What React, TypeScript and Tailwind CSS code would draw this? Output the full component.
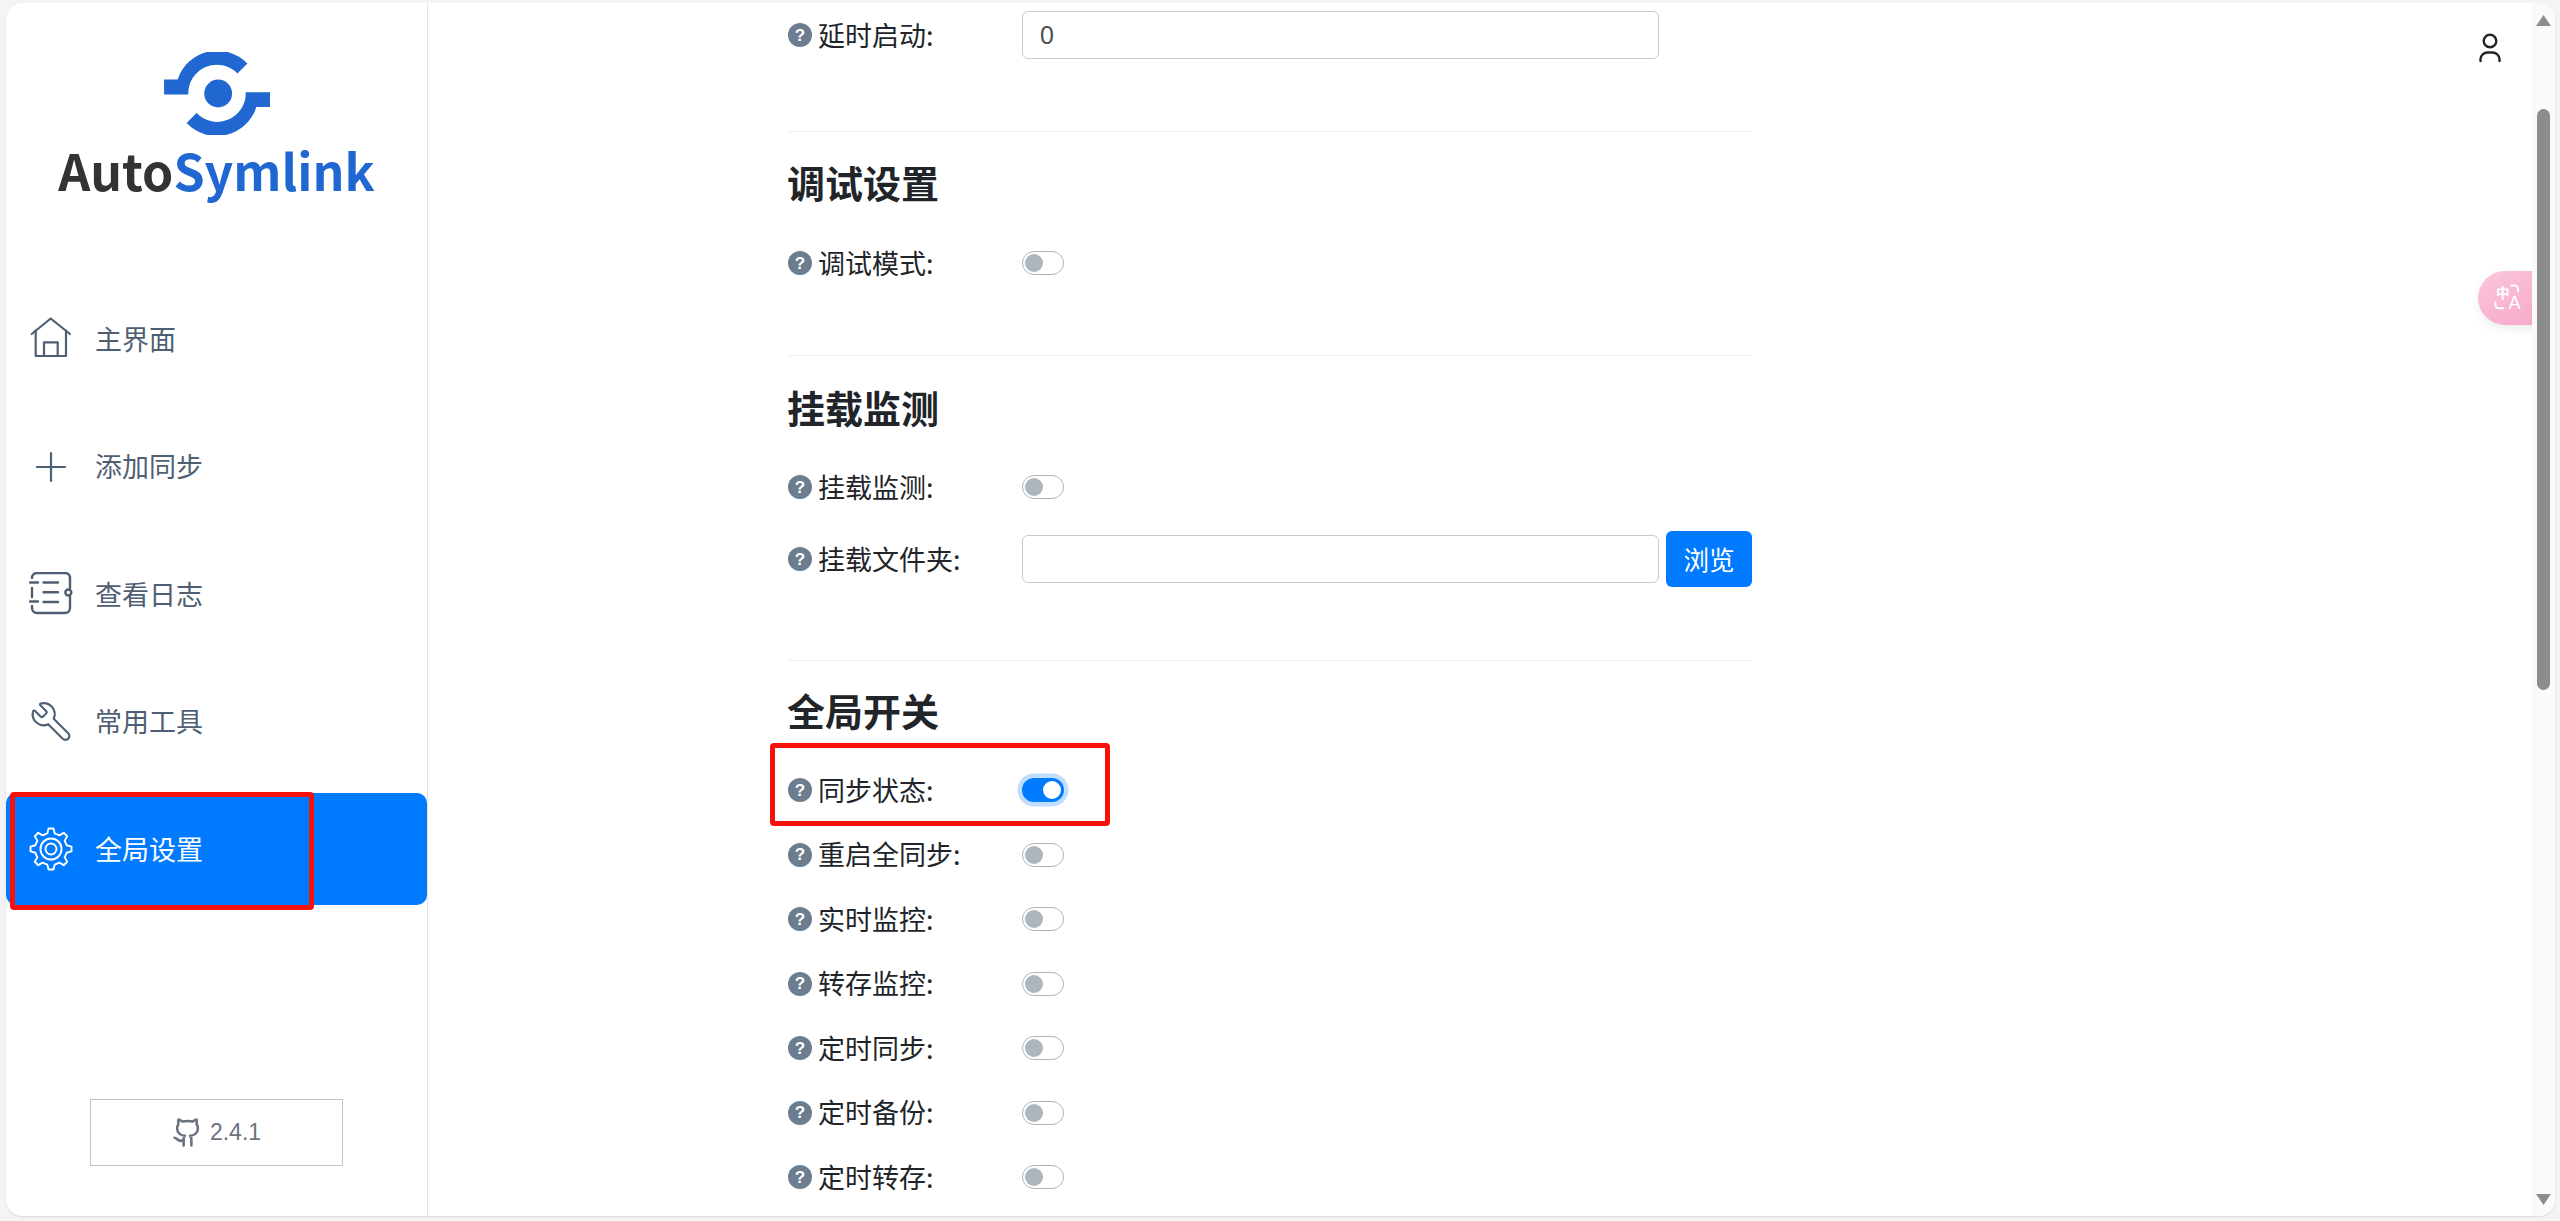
import { Github, Wrench } from 'lucide-react'

const cjk = "font-['Noto_Sans_CJK_SC','Noto_Sans',sans-serif]"

function gearPath(teeth: number, outer: number, root: number, c: number) {
  const step = (Math.PI * 2) / teeth
  const pts: string[] = []
  for (let i = 0; i < teeth; i++) {
    const a = i * step - Math.PI / 2
    const corners: [number, number][] = [
      [root, a - step * 0.3],
      [outer, a - step * 0.15],
      [outer, a + step * 0.15],
      [root, a + step * 0.3],
    ]
    corners.forEach(([r, t]) => {
      pts.push(`${(c + r * Math.cos(t)).toFixed(2)} ${(c + r * Math.sin(t)).toFixed(2)}`)
    })
  }
  return 'M' + pts.join('L') + 'Z'
}

function Logo() {
  return (
    <svg width="106" height="83" viewBox="487 155 319 250" fill="#2067d2">
      <path d="M487 238H528A125 125 0 0 1 738 190L708 220A86 86 0 0 0 560 283H487Z" />
      <path d="M487 238H528A125 125 0 0 1 738 190L708 220A86 86 0 0 0 560 283H487Z" transform="rotate(180 646.5 279.5)" />
      <circle cx="650" cy="280" r="42" />
    </svg>
  )
}

function HomeIcon() {
  return (
    <svg width="44" height="44" viewBox="0 0 44 44" fill="none" stroke="currentColor" strokeWidth="2.2" strokeLinejoin="round" strokeLinecap="round">
      <path d="M2.7 17 21.7 1.5 41 17" />
      <path d="M6.7 13.5V39H37V13.5" />
      <path d="M15 39V25.3H28.7V39" />
    </svg>
  )
}

function PlusIcon() {
  return (
    <svg width="44" height="44" viewBox="0 0 44 44" fill="none" stroke="currentColor" strokeWidth="2.2" strokeLinecap="round">
      <path d="M22 8V36M8 22H36" />
    </svg>
  )
}

function LogIcon() {
  return (
    <svg width="44" height="44" viewBox="0 0 44 44" fill="none" stroke="currentColor" strokeWidth="2.4" strokeLinecap="round">
      <path d="M3 6V6A5 5 0 0 1 8 1H36A5 5 0 0 1 41 6V16" />
      <circle cx="39.3" cy="20.5" r="3" />
      <path d="M41 25V36A5 5 0 0 1 36 41H8A5 5 0 0 1 3 36V34" />
      <path d="M1 10.5H9M3 16V25M1 29.5H9" />
      <path d="M14.5 10.5H29M14.5 20.3H29M14.5 30H29" />
    </svg>
  )
}

function GearIcon() {
  return (
    <svg width="48" height="48" viewBox="0 0 48 48" fill="none" stroke="currentColor" strokeWidth="2.1" strokeLinejoin="round">
      <path d={gearPath(8, 22.5, 17.5, 24)} />
      <circle cx="24" cy="24" r="11.5" />
      <circle cx="24" cy="24" r="6" />
    </svg>
  )
}

function UserIcon() {
  return (
    <svg width="30" height="40" viewBox="0 0 30 40" fill="none" stroke="#212529" strokeWidth="2.4" strokeLinecap="round">
      <circle cx="15" cy="15" r="6.3" />
      <path d="M5.5 35V33A7 7 0 0 1 12.5 26.5H17.5A7 7 0 0 1 24.5 33V35" />
    </svg>
  )
}

function TranslateIcon() {
  return (
    <svg width="34" height="34" viewBox="0 0 30 30" fill="none">
      <text x="9.5" y="15" textAnchor="middle" fontSize="12" fontWeight="700" fill="#fff" fontFamily="Noto Sans CJK SC">中</text>
      <text x="20" y="25" textAnchor="middle" fontSize="16" fontWeight="500" fill="#fff" fontFamily="Liberation Sans">A</text>
      <path d="M17 4H20A3 3 0 0 1 23 7V9M3 19V21A3 3 0 0 0 6 24H10" stroke="#fff" strokeWidth="1.7" strokeLinecap="round" />
    </svg>
  )
}

function HelpDot() {
  return (
    <span className="flex h-6 w-6 shrink-0 items-center justify-center rounded-full bg-[#6c7d8f] font-['Liberation_Sans',sans-serif] text-[17px] font-bold leading-none text-white">
      ?
    </span>
  )
}

function Label({ text }: { text: string }) {
  return (
    <div className="flex w-[234px] shrink-0 items-center gap-[6px]">
      <HelpDot />
      <span className="pb-[2px] text-[27px] leading-none text-[#212529]">{text}</span>
    </div>
  )
}

function Toggle({ on }: { on?: boolean }) {
  if (on) {
    return (
      <span className="flex h-6 w-[42px] items-center justify-end rounded-full bg-[#007bff] pr-[3px] shadow-[0_0_0_4.5px_#bfdeff]">
        <span className="h-[18px] w-[18px] rounded-full bg-white" />
      </span>
    )
  }
  return (
    <span className="flex h-6 w-[42px] items-center rounded-full border border-[#adb5bd] bg-white pl-[2px]">
      <span className="h-[18px] w-[18px] rounded-full bg-[#adb5bd]" />
    </span>
  )
}

function ToggleRow({ label, on }: { label: string; on?: boolean }) {
  return (
    <div className="flex h-6 items-center">
      <Label text={label} />
      <Toggle on={on} />
    </div>
  )
}

function Heading({ text }: { text: string }) {
  return <h2 className="-ml-px h-[46px] text-[38px] font-bold leading-[41px] text-[#212529]">{text}</h2>
}

function Divider({ className }: { className: string }) {
  return <div className={`h-px bg-[#eeeeee] ${className}`} />
}

const navItems = [
  { label: '主界面', icon: <HomeIcon /> },
  { label: '添加同步', icon: <PlusIcon /> },
  { label: '查看日志', icon: <LogIcon /> },
  { label: '常用工具', icon: <Wrench size={47} strokeWidth={1.15} className="-scale-x-100" /> },
  { label: '全局设置', icon: <GearIcon />, active: true },
]

const switches = ['重启全同步:', '实时监控:', '转存监控:', '定时同步:', '定时备份:', '定时转存:']

export default function App() {
  return (
    <div className={`relative h-[1221px] w-[2560px] overflow-hidden bg-[#f4f4f4] pl-[6px] pt-[3px] ${cjk}`}>
      <div className="flex h-[1213px] w-[2549px] overflow-hidden rounded-2xl bg-white shadow-[0_1px_2px_rgba(0,0,0,0.12)]">
        <aside className="flex w-[422px] shrink-0 flex-col items-center border-r border-[#e3e3e3]">
          <div className="mt-[49px]">
            <Logo />
          </div>
          <div className="mt-0 h-[68px] text-[50px] font-bold leading-[68px]">
            <span className="text-[#333333]">Auto</span>
            <span className="text-[#2067d2]">Symlink</span>
          </div>
          <nav className="mt-[80px] flex w-full flex-col gap-[15.5px]">
            {navItems.map((item) => (
              <div
                key={item.label}
                className={`flex h-[112px] items-center rounded-[10px] pl-[23px] text-[27px] ${
                  item.active ? 'bg-[#007bff] text-white' : 'text-[#4f5f73]'
                }`}
              >
                <span className="flex w-[44px] items-center justify-center">{item.icon}</span>
                <span className="ml-[22px] pb-[2px] leading-none">{item.label}</span>
              </div>
            ))}
          </nav>
          <div className="mb-[50px] mt-auto flex h-[67px] w-[253px] items-center justify-center gap-[7px] border border-[#c4c4c4] font-['Liberation_Sans',sans-serif] text-[23px] text-[#6b7280]">
            <Github size={31} strokeWidth={2} />
            <span>2.4.1</span>
          </div>
        </aside>

        <main className="relative flex-1 overflow-hidden pl-[360px] pt-[8px]">
          <div className="w-[964px]">
            <div className="flex h-12 items-center">
              <Label text="延时启动:" />
              <input
                readOnly
                value="0"
                className="h-12 w-[637px] rounded-md border border-[#c6cacf] px-[17px] font-['Liberation_Sans',sans-serif] text-[25px] text-[#495057] outline-none"
              />
            </div>

            <Divider className="mt-[72px]" />
            <div className="mt-[29px]">
              <Heading text="调试设置" />
            </div>
            <div className="mt-[44px]">
              <ToggleRow label="调试模式:" />
            </div>

            <Divider className="mt-[80px]" />
            <div className="mt-[30px]">
              <Heading text="挂载监测" />
            </div>
            <div className="mt-[43px]">
              <ToggleRow label="挂载监测:" />
            </div>
            <div className="mt-[32px] flex h-14 items-center">
              <Label text="挂载文件夹:" />
              <input readOnly className="h-12 w-[637px] rounded-md border border-[#c6cacf] outline-none" />
              <button className="ml-[7px] h-14 w-[86px] rounded-md bg-[#007bff] text-[25.6px] text-white">浏览</button>
            </div>

            <Divider className="mt-[73px]" />
            <div className="mt-[28px]">
              <Heading text="全局开关" />
            </div>
            <div className="mt-[43px] flex flex-col gap-[40.5px]">
              <ToggleRow label="同步状态:" on />
              {switches.map((label) => (
                <ToggleRow key={label} label={label} />
              ))}
            </div>
          </div>

          <div className="absolute left-[2047px] top-[23px]">
            <UserIcon />
          </div>
          <div className="absolute left-[2050px] top-[268px] flex h-[54px] w-[90px] items-center rounded-full bg-gradient-to-br from-[#fbc6dc] to-[#f5a3c7] pl-[14px] shadow-[0_4px_10px_rgba(0,0,0,0.07)]">
            <TranslateIcon />
          </div>
        </main>

        <div className="flex w-[23px] shrink-0 flex-col bg-[#fafafa] pl-[4px]">
          <svg width="15" height="11" viewBox="0 0 15 11" fill="#8c8c8c" className="mt-[12px]">
            <path d="M7.5 0 15 11H0Z" />
          </svg>
          <div className="ml-[1px] mt-[83px] h-[581px] w-[13px] rounded-full bg-[#8c8c8c]" />
          <svg width="15" height="11" viewBox="0 0 15 11" fill="#8c8c8c" className="mb-[11px] mt-auto">
            <path d="M0 0H15L7.5 11Z" />
          </svg>
        </div>
      </div>

      <div className="absolute left-[10px] top-[792px] h-[118px] w-[304px] rounded-sm border-[5px] border-[#f4120a]" />
      <div className="absolute left-[770px] top-[743px] h-[83px] w-[340px] rounded-sm border-[5px] border-[#f4120a]" />
    </div>
  )
}
